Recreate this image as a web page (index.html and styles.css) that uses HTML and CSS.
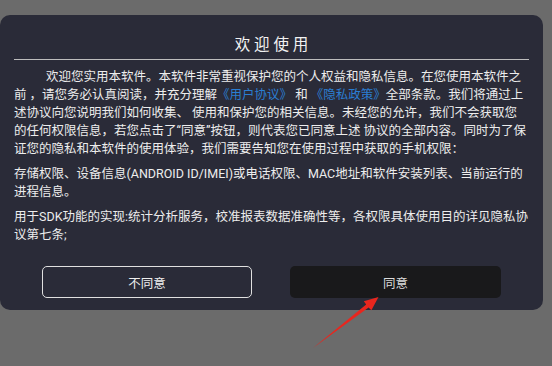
FILE: index.html
```html
<!DOCTYPE html>
<html lang="zh-CN">
<head>
<meta charset="utf-8">
<title>欢迎使用</title>
<link rel="stylesheet" href="styles.css">
</head>
<body>
<div class="dialog">
  <div class="title">欢 迎 使 用</div>
  <div class="content">
    <p class="para first">欢迎您实用本软件。本软件非常重视保护您的个人权益和隐私信息。在您使用本软件之<br>前 ，请您务必认真阅读，并充分理解<a class="link">《用户协议》</a> 和 <a class="link">《隐私政策》</a>全部条款。我们将通过上<br>述协议向您说明我们如何收集、 使用和保护您的相关信息。未经您的允许，我们不会获取您<br>的任何权限信息，若您点击了“同意”按钮，则代表您已同意上述 协议的全部内容。同时为了保<br>证您的隐私和本软件的使用体验，我们需要告知您在使用过程中获取的手机权限：</p>
    <p class="para">存储权限、设备信息(ANDROID ID/IMEI)或电话权限、MAC地址和软件安装列表、当前运行的<br>进程信息。</p>
    <p class="para">用于SDK功能的实现:统计分析服务，校准报表数据准确性等，各权限具体使用目的详见隐私协<br>议第七条;</p>
  </div>
  <div class="actions">
    <button class="btn btn-outline">不同意</button>
    <button class="btn btn-solid">同意</button>
  </div>
</div>
<svg class="arrow" width="552" height="366" viewBox="0 0 552 366">
  <polygon points="313,348 366.2,304.6 363.8,301.2 378.5,297 371.4,310.2 368.6,307.6" fill="#e8261e"/>
</svg>
</body>
</html>
```
FILE: styles.css
```css
html, body {
  margin: 0;
  padding: 0;
}
body {
  width: 552px;
  height: 366px;
  background: #6b6b6b;
  font-family: Roboto, "Noto Sans CJK SC", sans-serif;
  overflow: hidden;
  position: relative;
}
.dialog {
  box-sizing: border-box;
  width: 543px;
  height: 295px;
  margin-top: 15px;
  background: #2a2b38;
  border-radius: 10px;
  padding: 0 14px;
  display: flex;
  flex-direction: column;
}
.title {
  padding-top: 21px;
  padding-bottom: 5px;
  line-height: 18px;
  font-size: 15.5px;
  color: #f2f2f2;
  text-align: center;
  border-bottom: 1px solid #bdbdbd;
}
.content {
  margin-top: 8px;
  color: #ededed;
  font-size: 12.5px;
  line-height: 18px;
}
.para {
  margin: 0 0 7px 0;
  white-space: nowrap;
}
.para.first {
  text-indent: 32px;
}
.link {
  color: #2a7ed2;
}
.actions {
  margin-top: 15px;
  display: flex;
  justify-content: center;
  gap: 38px;
}
.btn {
  box-sizing: border-box;
  width: 210px;
  height: 32px;
  border-radius: 5px;
  font-family: Roboto, "Noto Sans CJK SC", sans-serif;
  font-size: 12.5px;
  color: #eeeeee;
  padding: 0;
  cursor: pointer;
}
.btn-outline {
  background: transparent;
  border: 1.5px solid #e0e0e0;
}
.btn-solid {
  width: 211px;
  background: #19191b;
  border: none;
  color: #dcdcdc;
}
.arrow {
  position: absolute;
  left: 0;
  top: 0;
  pointer-events: none;
}
```
